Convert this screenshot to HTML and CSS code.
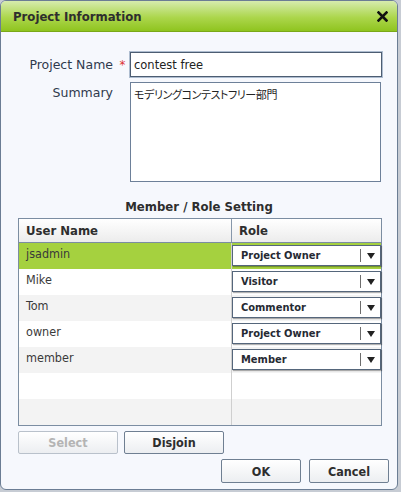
FILE: index.html
```html
<!DOCTYPE html>
<html lang="ja">

<head>

    <meta charset="UTF-8">
    <meta name="viewport" content="width=device-width, initial-scale=1.0">
    <title>Project Information</title>

    <link rel="stylesheet" href="styles.css">

</head>

<body>

    <div class="dialog">

        <div class="header">

            <h1>Project Information</h1>
            <button class="close-btn" title="Close">
                <svg width="11" height="11" viewBox="0 0 11 11">
                    <path d="M1.5 1.5 L9.5 9.5 M9.5 1.5 L1.5 9.5" stroke="#111" stroke-width="2.6" stroke-linecap="square" />
                </svg>
            </button>

        </div>

        <div class="form">

            <label class="form-label label-name" for="project-name">Project Name</label>
            <span class="required">*</span>
            <input type="text" id="project-name" class="input-name" value="contest free">

            <label class="form-label label-summary" for="summary">Summary</label>
            <span></span>
            <textarea id="summary" class="input-summary">モデリングコンテストフリー部門</textarea>

        </div>

        <h2 class="section-title">Member / Role Setting</h2>

        <div class="member-list">

            <div class="member-head">
                <div class="cell cell-user">User Name</div>
                <div class="cell cell-role">Role</div>
            </div>

            <div class="member-row selected">
                <div class="cell cell-user">jsadmin</div>
                <div class="cell cell-role">
                    <div class="role-select"><span>Project Owner</span><i class="arrow"></i></div>
                </div>
            </div>

            <div class="member-row">
                <div class="cell cell-user">Mike</div>
                <div class="cell cell-role">
                    <div class="role-select"><span>Visitor</span><i class="arrow"></i></div>
                </div>
            </div>

            <div class="member-row alt">
                <div class="cell cell-user">Tom</div>
                <div class="cell cell-role">
                    <div class="role-select"><span>Commentor</span><i class="arrow"></i></div>
                </div>
            </div>

            <div class="member-row">
                <div class="cell cell-user">owner</div>
                <div class="cell cell-role">
                    <div class="role-select"><span>Project Owner</span><i class="arrow"></i></div>
                </div>
            </div>

            <div class="member-row alt">
                <div class="cell cell-user">member</div>
                <div class="cell cell-role">
                    <div class="role-select"><span>Member</span><i class="arrow"></i></div>
                </div>
            </div>

            <div class="member-row">
                <div class="cell cell-user"></div>
                <div class="cell cell-role"></div>
            </div>

            <div class="member-row alt">
                <div class="cell cell-user"></div>
                <div class="cell cell-role"></div>
            </div>

        </div>

        <div class="member-actions">
            <button class="btn btn-select" disabled>Select</button>
            <button class="btn btn-disjoin">Disjoin</button>
        </div>

        <div class="dialog-actions">
            <button class="btn btn-ok">OK</button>
            <button class="btn btn-cancel">Cancel</button>
        </div>

    </div>

</body>

</html>
```

FILE: styles.css
```css
body {
    margin: 0;
    background-color: #c7ccd4;
    font-family: "DejaVu Sans Condensed", "DejaVu Sans", sans-serif;
    color: #333;
}

.dialog {
    box-sizing: border-box;
    width: 398px;
    height: 490px;
    background-color: #f6f8fd;
    border: 1px solid #6b7d94;
    border-radius: 6px;
    overflow: hidden;
}

.header {
    display: flex;
    justify-content: space-between;
    align-items: center;
    height: 31px;
    padding: 1px 9px 0 12px;
    box-sizing: border-box;
    background: linear-gradient(#d6ecae, #acd64c 55%, #8fc41f);
    border-bottom: 1px solid #7aa818;
}

h1 {
    margin: 0;
    font-size: 13px;
    font-weight: bold;
    color: #2e2e2e;
}

.close-btn {
    display: flex;
    padding: 0;
    border: none;
    background: none;
    cursor: pointer;
}

.form {
    display: grid;
    grid-template-columns: 112px 17px 252px;
    row-gap: 5px;
    padding-top: 20px;
}

.form-label {
    text-align: right;
    font-family: "DejaVu Sans", sans-serif;
    font-size: 12.5px;
    color: #2f3a4d;
}

.label-name {
    align-self: center;
}

.label-summary {
    padding-top: 3px;
}

.required {
    align-self: center;
    text-align: center;
    color: #d33;
    font-size: 13px;
    padding-left: 2px;
}

.input-name {
    box-sizing: border-box;
    height: 25px;
    margin: 0;
    padding: 0 3px;
    border: 1px solid #4d5d72;
    box-shadow: 0 0 0 1px #aebdd0;
    font-family: "DejaVu Sans", sans-serif;
    font-size: 11.5px;
    color: #222;
    outline: none;
}

.input-summary {
    box-sizing: border-box;
    width: 251px;
    height: 100px;
    margin: 0;
    padding: 4px 3px;
    border: 1px solid #6d8099;
    resize: none;
    font-family: "Noto Sans CJK JP", sans-serif;
    font-size: 11px;
    font-feature-settings: "palt";
    letter-spacing: -0.4px;
    line-height: 1.3;
    color: #222;
    outline: none;
}

.section-title {
    margin: 16px 0 2px;
    height: 18px;
    line-height: 18px;
    text-align: center;
    font-size: 13px;
    font-weight: bold;
    color: #2e2e2e;
}

.member-list {
    box-sizing: border-box;
    width: 364px;
    height: 208px;
    margin-left: 17px;
    background-color: #fff;
    border: 1px solid #7b8da2;
}

.member-head,
.member-row {
    display: grid;
    grid-template-columns: 213px 1fr;
}

.member-head {
    height: 24px;
    box-sizing: border-box;
    border-bottom: 1px solid #7b8da2;
    background: linear-gradient(#ffffff, #ececec);
    font-weight: bold;
    font-size: 13px;
    color: #2e2e2e;
}

.member-head .cell {
    line-height: 23px;
}

.member-head .cell-user {
    border-right: 1px solid #8797aa;
}

.member-row {
    height: 26px;
    font-size: 12.5px;
    color: #3a3a3a;
}

.member-row.alt {
    background-color: #f3f3f3;
}

.member-row.selected {
    background-color: #a5d13f;
}

.cell-user {
    padding: 3px 0 0 7px;
}

.member-row .cell-user {
    border-right: 1px solid #cfcfcf;
}

.member-head .cell-user,
.member-head .cell-role {
    padding: 0 0 0 7px;
}

.role-select {
    box-sizing: border-box;
    display: flex;
    align-items: center;
    justify-content: space-between;
    width: 149px;
    height: 21px;
    margin-top: 2px;
    padding-left: 8px;
    background-color: #fff;
    border: 1px solid #55667b;
    box-shadow: 1px 1px 1px rgba(0, 0, 0, 0.3);
    font-size: 11px;
    font-weight: bold;
    color: #262a33;
}

.arrow {
    display: flex;
    align-items: center;
    justify-content: center;
    width: 19px;
    height: 13px;
    border-left: 1px solid #6d6d6d;
}

.arrow::after {
    content: "";
    border-left: 4px solid transparent;
    border-right: 4px solid transparent;
    border-top: 6px solid #222;
}

.member-actions {
    display: flex;
    gap: 6px;
    margin: 5px 0 0 17px;
}

.dialog-actions {
    display: flex;
    justify-content: flex-end;
    gap: 8px;
    margin: 5px 8px 0 0;
}

.btn {
    box-sizing: border-box;
    height: 23px;
    padding: 0;
    border: 1px solid #6f7f92;
    border-radius: 2px;
    background: linear-gradient(#ffffff, #eceef1);
    font-family: "DejaVu Sans Condensed", "DejaVu Sans", sans-serif;
    font-size: 12.5px;
    font-weight: bold;
    color: #2e2e2e;
    cursor: pointer;
}

.btn-select,
.btn-disjoin {
    width: 100px;
}

.btn-select {
    color: #b4b4b4;
    border-color: #b9c1cb;
    cursor: default;
}

.btn-ok,
.btn-cancel {
    width: 80px;
    height: 24px;
}
```
